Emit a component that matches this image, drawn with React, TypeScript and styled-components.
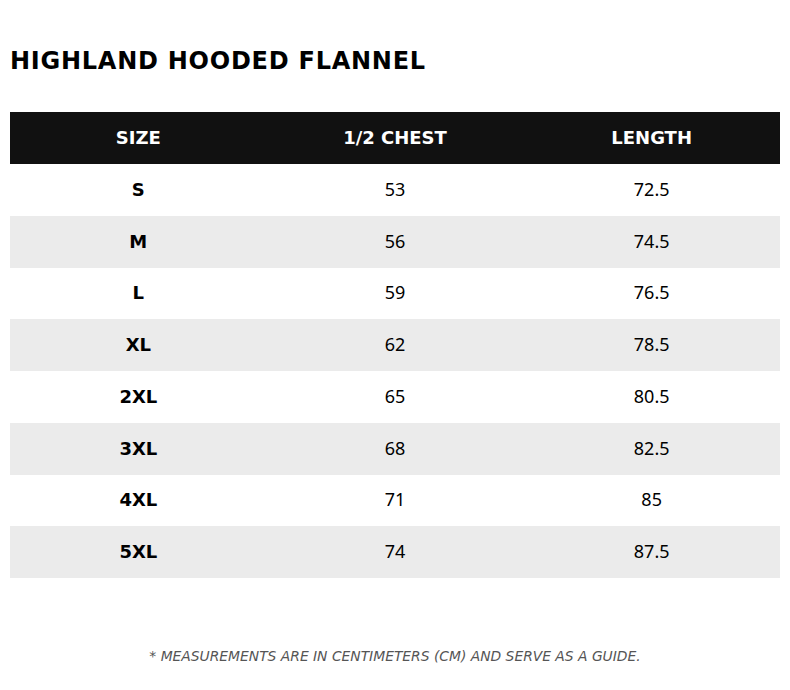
import React from "react";
import styled, { createGlobalStyle } from "styled-components";

const Global = createGlobalStyle`
  html, body { margin: 0; padding: 0; background: #fff; }
  body { font-family: "DejaVu Sans", Verdana, sans-serif; color: #000; }
`;

const Page = styled.div`
  padding: 47px 10px 0;
  display: flex;
  flex-direction: column;
`;

const Title = styled.h1`
  margin: 0 0 37px;
  font-family: "DejaVu Sans", Verdana, sans-serif;
  font-size: 24px;
  font-weight: 700;
  line-height: 28px;
  letter-spacing: 0.75px;
`;

const Table = styled.div`
  display: grid;
  grid-template-columns: repeat(3, 1fr);
`;

const HeadCell = styled.div`
  height: 52px;
  padding-bottom: 1px;
  box-sizing: border-box;
  background: #111111;
  color: #fff;
  font-family: "DejaVu Sans", Verdana, sans-serif;
  font-weight: 700;
  font-size: 18px;
  display: flex;
  align-items: center;
  justify-content: center;
`;

const Cell = styled.div<{ $alt: boolean; $bold?: boolean }>`
  height: 51.75px;
  box-sizing: border-box;
  padding-bottom: ${(p) => (p.$bold ? "1px" : "2px")};
  background: ${(p) => (p.$alt ? "#ebebeb" : "#ffffff")};
  font-size: 18px;
  font-family: ${(p) =>
    p.$bold ? `"DejaVu Sans", Verdana, sans-serif` : `"Noto Sans", "Open Sans", sans-serif`};
  font-weight: ${(p) => (p.$bold ? 700 : 400)};
  display: flex;
  align-items: center;
  justify-content: center;
`;

const Note = styled.p`
  margin: 70px 0 0;
  text-align: center;
  font-family: "DejaVu Sans", Verdana, sans-serif;
  font-style: italic;
  font-size: 13.85px;
  color: #555;
`;

const rows: [string, string, string][] = [
  ["S", "53", "72.5"],
  ["M", "56", "74.5"],
  ["L", "59", "76.5"],
  ["XL", "62", "78.5"],
  ["2XL", "65", "80.5"],
  ["3XL", "68", "82.5"],
  ["4XL", "71", "85"],
  ["5XL", "74", "87.5"],
];

export default function App() {
  return (
    <Page>
      <Global />
      <Title>HIGHLAND HOODED FLANNEL</Title>
      <Table>
        <HeadCell>SIZE</HeadCell>
        <HeadCell>1/2 CHEST</HeadCell>
        <HeadCell>LENGTH</HeadCell>
        {rows.map((r, i) => (
          <React.Fragment key={r[0]}>
            <Cell $alt={i % 2 === 1} $bold>{r[0]}</Cell>
            <Cell $alt={i % 2 === 1}>{r[1]}</Cell>
            <Cell $alt={i % 2 === 1}>{r[2]}</Cell>
          </React.Fragment>
        ))}
      </Table>
      <Note>* MEASUREMENTS ARE IN CENTIMETERS (CM) AND SERVE AS A GUIDE.</Note>
    </Page>
  );
}
